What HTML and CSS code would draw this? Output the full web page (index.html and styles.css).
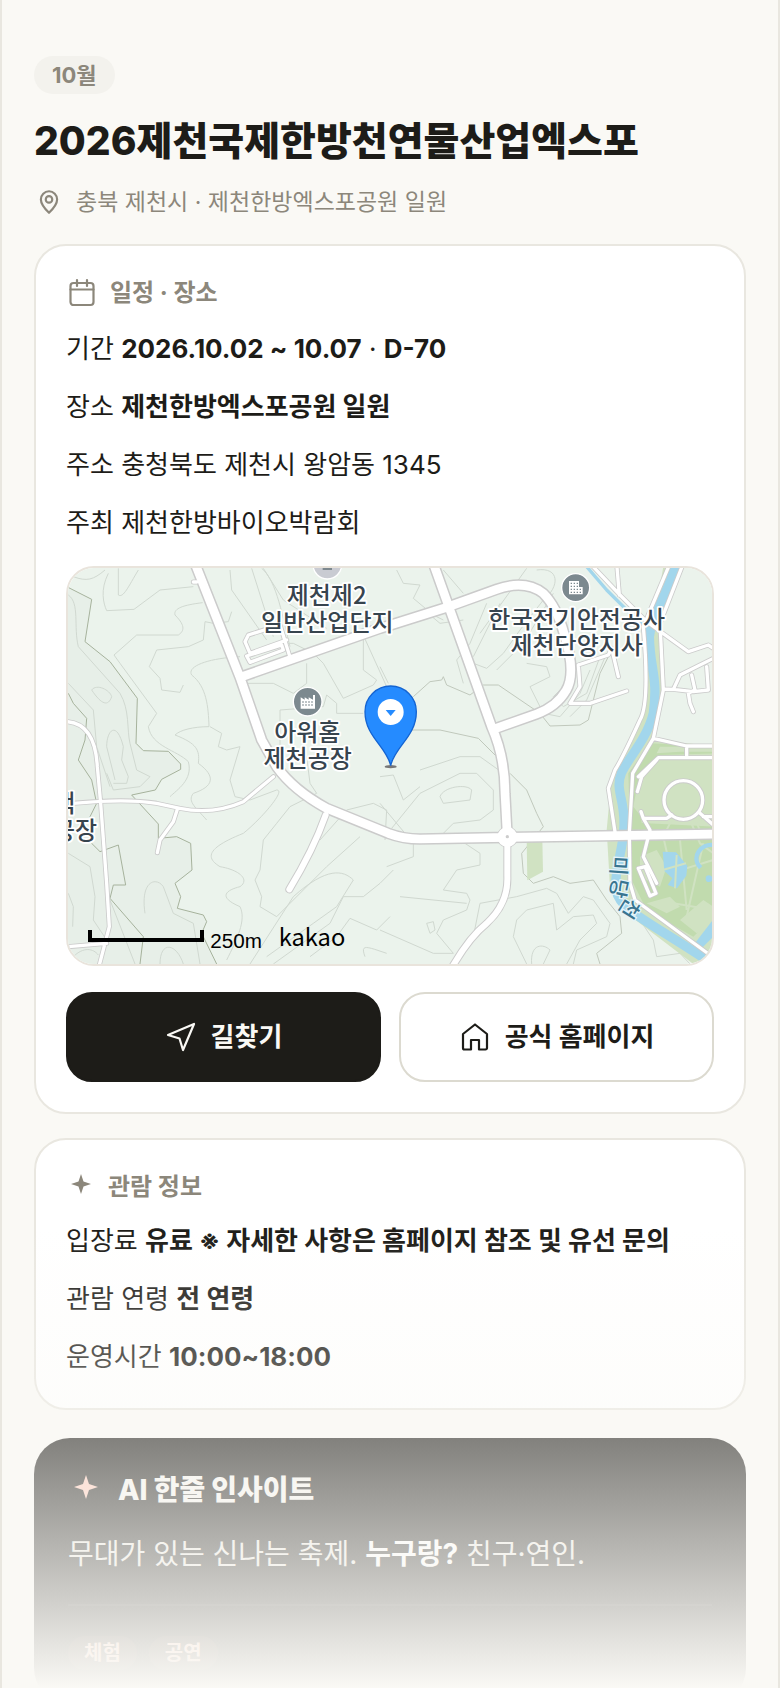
FILE: index.html
```html
<!DOCTYPE html>
<html lang="ko">
<head>
<meta charset="utf-8">
<meta name="viewport" content="width=device-width, initial-scale=1">
<title>2026제천국제한방천연물산업엑스포</title>
<link rel="stylesheet" href="styles.css">
</head>
<body>
<main class="page">
  <header class="head">
    <span class="month">10월</span>
    <h1 class="title">2026제천국제한방천연물산업엑스포</h1>
    <p class="place">
      <svg class="place-icon" viewBox="0 0 24 24" aria-hidden="true"><path d="M12 22C9 19 4.500 14.500 4.500 9.600a7.500 7.500 0 0 1 15 0C19.500 14.500 15 19 12 22z"/><circle cx="12" cy="9.600" r="3"/></svg>
      <span>충북 제천시 · 제천한방엑스포공원 일원</span>
    </p>
  </header>

  <section class="card schedule">
    <h2 class="card-title">
      <svg class="icon" viewBox="0 0 32 32" aria-hidden="true"><rect x="4.500" y="6" width="23" height="22" rx="3"/><path d="M4.500 12.500h23M11 3v6M21 3v6"/></svg>
      <span>일정 · 장소</span>
    </h2>
    <div class="rows">
      <p>기간 <b>2026.10.02 ~ 10.07</b> · <b>D-70</b></p>
      <p>장소 <b>제천한방엑스포공원 일원</b></p>
      <p>주소 충청북도 제천시 왕암동 1345</p>
      <p>주최 제천한방바이오박람회</p>
    </div>
    <div class="map">
      <svg class="map-canvas" viewBox="24 24 1932 1188" preserveAspectRatio="xMidYMid slice" role="img" aria-label="제천한방엑스포공원 지도">
        <rect class="land" x="0" y="0" width="1980" height="1240"/>
        <path class="hill" d="M20 80L95 118 75 245 150 305 232 415 228 550 250 572 325 574 362 612V628L305 658 286 690 215 705 295 792V835L350 830 392 850 396 930 345 970 362 1010 352 1045 430 1065 440 1085 425 1120 470 1212H20z"/>
        <g class="contour">
          <path d="M40 50C80 65 100 60 135 30M145 40C120 90 130 130 140 152L222 148 300 90 400 80M175 25V105C190 115 205 80 235 30M428 128C370 135 340 145 345 165 380 200 370 215 355 225L230 225 162 285 180 310 290 460 265 500C275 560 350 570 385 605 400 660 350 690 330 710"/>
          <path d="M515 155L505 185 460 190 435 185 430 240 385 260 290 270 268 320 300 355 305 390 360 397 370 375M540 290C440 295 380 320 395 345 440 380 445 440 447 500 400 500 360 510 345 525 410 550 420 570 415 610 470 650 460 680 400 700 380 725 410 745 440 780 520 800V835L430 860 415 925 460 955 395 985 390 1020 460 1060 480 1100 450 1180 440 1212"/>
          <path d="M510 30L515 90 620 240M575 25L640 230M605 25C650 60 670 180 690 260M610 25L670 120 800 205M450 500L485 520 475 560 500 570 540 560 510 660 525 710 570 720 650 690C680 690 600 780 550 820 450 860 430 890 480 920 540 930 570 960 540 980 500 990 470 1010 540 1040 560 1080 530 1140 500 1200"/>
          <path d="M25 105C60 130 40 200 55 260L180 400C210 450 200 510 210 550L230 630 270 650 240 680 160 690 140 640M25 370L100 450 110 560 150 680M95 390C110 370 150 390 155 410 145 440 125 435 95 390M160 670L200 670 205 650 185 600 190 560C170 480 140 510 140 560L165 660M25 880L90 920 105 1010 100 1080 140 1140M25 1000L40 1040 38 1100M150 1020L225 1212M255 1060C240 960 290 950 310 980L340 1060 400 1090 420 1212M300 1212C300 1140 350 1150 370 1212M40 1190C70 1160 100 1165 115 1185"/>
          <path d="M690 590L740 590 750 670 770 700 690 740 650 790 610 840 600 930 585 960 605 1010 600 1040 650 1070 800 920 900 830M660 590V450L790 440 800 405 830 430 830 460 910 460M740 310V370L700 400 640 370H560M910 180V330L950 360 940 375 850 415 790 310 760 280 700 250 670 250M905 215L980 380M570 1212L700 1010C800 920 850 930 880 960L830 1040 760 1090 620 1190M640 1212L810 1090 850 1010 910 1010 960 970 1000 930M780 840L860 750 940 730 980 750 975 840M750 1190L830 1130 870 1075 950 1110 990 1070M915 1190C900 1150 920 1160 980 1180"/>
          <path d="M1010 30L1030 70 1080 75 1060 115 1120 165 1150 180M1110 165L1140 190 1210 180M1150 30L1210 100M1280 130L1230 250 1190 300 1210 370M1320 130L1240 290M1430 30C1500 20 1500 80 1450 120L1380 210 1330 280 1280 325 1240 310M1400 25L1260 220M1480 100L1390 250 1310 330M960 320L985 370M1310 330M1590 330L1560 400 1500 470 1450 460 1410 380 1470 350 1460 320 1400 310M1640 280L1580 420 1530 470M1620 290L1580 400 1510 440 1480 410 1510 380M1080 630L1200 590 1260 590 1330 640M995 805L1080 700 1200 640 1250 640 1300 690 1300 750 1260 780 1180 790 1150 820M1140 710C1150 680 1220 670 1235 690L1230 720 1150 730zM960 650L1000 645 1030 720 1080 680M960 730L1060 850V890L980 920M1160 850L1200 840 1260 880 1260 915 1190 930 1150 990 1220 1000 1230 1020 1220 1050 1150 1080 1130 1120 1180 1180 1120 1180 960 1110M1020 1010L1220 1030M1100 1090L1120 1085 1125 1110 1110 1120zM1240 1130L1260 1030 1370 1010 1460 985 1490 1000 1525 1060 1570 1010 1600 1020 1650 1090 1640 1130 1550 1170 1540 1212M1400 1212L1360 1130 1370 1080 1400 1050 1480 1030 1490 1110 1540 1070 1600 1065 1610 1090 1560 1140 1520 1212M1415 1212C1410 1150 1450 1150 1470 1170L1450 1212M1740 1080L1780 1140 1790 1190 1860 1180 1890 1212"/>
        </g>
        <g class="ridge">
          <path d="M20 80L95 118 75 245 150 305 232 415 228 550 250 572 325 574 362 612V628L305 658 286 690 215 705 295 792V835L350 830 392 850 396 930 345 970 362 1010 352 1045 430 1065 440 1085 425 1120 470 1212"/>
          <path d="M25 400L40 430 80 475 75 540 55 600 95 660 110 730 90 770 95 850 120 875 175 855 197 975H160L150 1015 250 1130 240 1212"/>
        </g>
        <g class="border-line">
          <path d="M1060 410L1110 365 1145 360 1150 350 1160 375 1230 405 1270 375 1315 375 1440 460 1470 498 1560 495 1585 480 1620 340 1650 280M1040 510H1140L1255 535 1310 590M1350 640L1400 690 1430 760 1450 800 1385 880 1390 940 1420 970 1480 950 1530 970 1600 960 1640 1020 1680 1070 1685 1120 1610 1180 1620 1212M1840 110L1885 125 1890 160 1925 160 1940 125H1960"/>
        </g>

        <path class="park" d="M1400 840h47l2 95-47 26z"/>
        <path class="park" d="M1810 20L1780 190 1745 470 1655 650 1640 810 1650 980 1700 1060 1900 1212H1980V560L1780 540 1810 380 1800 240 1870 20z"/>
        <path class="land" d="M1860 20L1800 210 1815 400 1785 535 1860 545 1980 550V20z"/>
        <path class="park-deep" d="M1770 550L1960 560V580L1800 585 1735 660 1720 740 1760 790 1960 800V1070L1900 1130 1760 1050 1715 960 1705 640z"/>
        <path class="park" d="M1810 600H1960V770H1810L1745 790 1735 700zM1790 580L1860 575H1960V560H1800z"/>
        <path class="park" d="M1740 890l50-20 30 50-20 60-60-30zM1760 1030l70-20 30 30-40 20zM1860 1080l70-60 30 20v50l-50 30z"/>
        <g class="garden">
          <path d="M1840 770L1810 830 1830 920M1890 780L1920 850 1960 880M1860 840L1880 1050M1830 940L1960 900M1930 850L1880 1070M1840 1030L1960 1050M1860 760L1960 790M1900 760l30 80"/>
        </g>
        <g class="water">
          <path d="M1808 875l40 2 34 40-3 30-28 38-28-10 14-20-24-22z"/>
          <path d="M1908 1145L1960 1078V1130L1925 1165z"/>
          <circle cx="1947" cy="956" r="10"/>
        </g>
        <path class="water-ring" d="M1960 855c-35-6-70 35-38 68"/>
        <path class="garden" d="M1808 930l70-20M1850 885l-5 100"/>
        <path class="river" d="M1845 20C1820 110 1775 160 1768 230 1770 330 1795 350 1780 460 1760 540 1700 600 1684 640 1664 690 1696 720 1692 800 1690 870 1660 940 1668 990 1680 1050 1750 1075 1940 1200"/>
        <path class="brook" d="M1580 20L1640 90 1720 170 1780 225"/>

        <g class="casing">
          <path class="w3" d="M405 10L540 352 605 540 650 620Q700 690 800 745L985 820Q1030 837 1080 837L1340 832 1980 822M540 352L960 205 1160 142 1310 88Q1395 58 1450 100 1490 140 1512 220 1550 340 1518 392 1490 440 1430 462L1300 508M1120 10L1295 500Q1335 590 1335 700L1342 832"/>
          <path class="w2" d="M1342 832V950Q1345 1030 1280 1090 1230 1130 1180 1215M797 765Q760 870 688 988"/>
          <path class="w1" d="M20 485Q105 490 112 620L122 730 140 970 148 1100 118 1215M40 730Q200 715 290 730L360 745Q460 765 550 725L640 650M352 748L340 785 300 840 292 878M25 1160L140 1150M570 280L555 245 565 225 660 195 688 285M570 280L680 240M560 288L665 255 670 270 570 307zM400 66h10"/>
          <path class="w1" d="M1590 10L1680 105 1760 185 1885 275 1945 255 1960 265M1670 10L1678 105M1830 10L1750 200Q1770 430 1740 480 1690 590 1665 630L1645 685 1665 815M1870 10L1800 190 1810 390 1780 535 1718 640 1708 820 1710 970 1725 1020 1950 1185M1780 535L1880 558H1960M1880 558V590M1960 593H1795L1735 650M1555 315L1645 285 1655 265 1675 350M1555 315L1560 380 1530 430H1590L1700 393M1810 387L1840 388 1860 345 1960 295M1840 388L1900 395 1945 390 1940 320M1895 345L1905 390 1885 400 1890 430 1900 455M1790 600L1745 650 1732 695M1743 755L1750 775H1820L1835 765M1750 775L1770 810 1750 890 1790 970M1735 925L1755 920 1788 1000 1770 1008zM1920 760L1960 795M1930 770H1960"/>
          <circle class="w1" cx="1870" cy="720" r="58"/>
          <circle class="hub" cx="1342" cy="831" r="30"/>
        </g>
        <g class="road">
          <path class="w3" d="M405 10L540 352 605 540 650 620Q700 690 800 745L985 820Q1030 837 1080 837L1340 832 1980 822M540 352L960 205 1160 142 1310 88Q1395 58 1450 100 1490 140 1512 220 1550 340 1518 392 1490 440 1430 462L1300 508M1120 10L1295 500Q1335 590 1335 700L1342 832"/>
          <path class="w2" d="M1342 832V950Q1345 1030 1280 1090 1230 1130 1180 1215M797 765Q760 870 688 988"/>
          <path class="w1" d="M20 485Q105 490 112 620L122 730 140 970 148 1100 118 1215M40 730Q200 715 290 730L360 745Q460 765 550 725L640 650M352 748L340 785 300 840 292 878M25 1160L140 1150M570 280L555 245 565 225 660 195 688 285M570 280L680 240M560 288L665 255 670 270 570 307zM400 66h10"/>
          <path class="w1" d="M1590 10L1680 105 1760 185 1885 275 1945 255 1960 265M1670 10L1678 105M1830 10L1750 200Q1770 430 1740 480 1690 590 1665 630L1645 685 1665 815M1870 10L1800 190 1810 390 1780 535 1718 640 1708 820 1710 970 1725 1020 1950 1185M1780 535L1880 558H1960M1880 558V590M1960 593H1795L1735 650M1555 315L1645 285 1655 265 1675 350M1555 315L1560 380 1530 430H1590L1700 393M1810 387L1840 388 1860 345 1960 295M1840 388L1900 395 1945 390 1940 320M1895 345L1905 390 1885 400 1890 430 1900 455M1790 600L1745 650 1732 695M1743 755L1750 775H1820L1835 765M1750 775L1770 810 1750 890 1790 970M1735 925L1755 920 1788 1000 1770 1008zM1920 760L1960 795M1930 770H1960"/>
          <circle class="w1" cx="1870" cy="720" r="58"/>
          <circle class="hub" cx="1342" cy="831" r="30"/>
        </g>
        <circle class="hub-dot" cx="1342" cy="830" r="5"/>

        <g>
          <circle class="poi-light" cx="802" cy="14" r="43"/>
          <path class="poi-dark" d="M788 20h28v10h-28z"/>
          <circle class="poi" cx="743" cy="425" r="43"/>
          <path class="poi-mark" d="M722 446V412l12 7v-7l12 7v-7l13 7V405h6v41z"/>
          <path class="poi-dots" d="M727 426h36M727 435h36"/>
          <circle class="poi" cx="1547" cy="83" r="42"/>
          <path class="poi-mark" d="M1527 103V63h30v18h11v22z"/>
          <path class="poi-dots" d="M1532 70h22M1532 79h22M1532 88h34M1532 97h34"/>
        </g>
        <g class="label">
          <text x="800" y="132">제천제2</text>
          <text x="802" y="212">일반산업단지</text>
          <text x="742" y="543">아워홈</text>
          <text x="743" y="622">제천공장</text>
          <text x="1550" y="203">한국전기안전공사</text>
          <text x="1550" y="283">제천단양지사</text>
          <text x="13" y="757">택</text>
          <text x="45" y="836">공장</text>
        </g>
        <g class="river-label">
          <text transform="translate(1676 918) rotate(94)" x="0" y="22">미</text>
          <text transform="translate(1676 985) rotate(102)" x="0" y="22">당</text>
          <text transform="translate(1708 1045) rotate(122)" x="0" y="22">천</text>
        </g>

        <ellipse class="shadow" cx="992" cy="620" rx="18" ry="5"/>
        <path class="pin" d="M992 617C980 560 915 530 915 455a77 77 0 0 1 154 0C1069 530 1004 560 992 617z"/>
        <circle class="pin-hole" cx="992" cy="456" r="39"/>
        <path class="pin-mark" d="M977 450h30l-15 18z"/>

        <path class="scale" d="M90 1110v30h336v-30"/>
        <text class="scale-text" x="451" y="1164">250m</text>
        <text class="brand" x="656" y="1157">kakao</text>
      </svg>
    </div>
    <div class="actions">
      <a class="button button-dark" href="#directions">
        <svg class="icon" viewBox="0 0 32 32" aria-hidden="true"><path d="M29 3L18 29 14.500 17.500 3 14z"/></svg>
        <span>길찾기</span>
      </a>
      <a class="button" href="#homepage">
        <svg class="icon" viewBox="0 0 32 32" aria-hidden="true"><path d="M16 3.500L4 13V27a1.500 1.500 0 0 0 1.500 1.500H12V19h8v9.500h6.500a1.500 1.500 0 0 0 1.500-1.500V13z"/></svg>
        <span>공식 홈페이지</span>
      </a>
    </div>
  </section>

  <section class="card">
    <h2 class="card-title">
      <svg class="star" viewBox="0 0 30 30" aria-hidden="true"><path d="M15 2L17.500 9.500 25 12 17.500 14.500 15 22 12.500 14.500 5 12 12.500 9.500z"/></svg>
      <span>관람 정보</span>
    </h2>
    <div class="rows">
      <p>입장료 <b>유료 ※ 자세한 사항은 홈페이지 참조 및 유선 문의</b></p>
      <p>관람 연령 <b>전 연령</b></p>
      <p>운영시간 <b>10:00~18:00</b></p>
    </div>
  </section>

  <section class="insight">
    <h2 class="insight-title">
      <svg class="insight-star" viewBox="0 0 36 36" aria-hidden="true"><path d="M18 3L21 12 30 15 21 18 18 27 15 18 6 15 15 12z"/></svg>
      <span>AI 한줄 인사이트</span>
    </h2>
    <p class="insight-text">무대가 있는 신나는 축제. <b>누구랑?</b> 친구·연인.</p>
    <div class="tags"><span class="tag">체험</span><span class="tag">공연</span></div>
  </section>
  <div class="fade"></div>
</main>
</body>
</html>
```

FILE: styles.css
```css
* {
  box-sizing: border-box;
}

body,
h1,
h2,
p {
  margin: 0;
}

body {
  background: #faf9f5;
  color: #1d1c18;
  font-family: Inter, "Noto Sans CJK KR", sans-serif;
  font-size: 26px;
}

b {
  font-weight: 700;
}

.page {
  position: relative;
  height: 100vh;
  overflow: hidden;
  padding: 56px 32px 0;
  border: solid #e9e7e0;
  border-width: 0 2px;
}

.head {
  display: flex;
  flex-direction: column;
  align-items: flex-start;
  margin-bottom: 24px;
}

.month {
  padding: 0 18px;
  border-radius: 19px;
  background: #f3f2ed;
  color: #8c877b;
  font-size: 22px;
  font-weight: 700;
  line-height: 38px;
}

.title {
  margin-top: 22px;
  font-size: 39px;
  font-weight: 800;
  line-height: 50px;
}

.place {
  display: flex;
  align-items: center;
  gap: 14px;
  margin-top: 18px;
  padding-left: 2px;
  color: #8c877b;
  font-size: 23px;
  line-height: 36px;
}

.place-icon {
  width: 26px;
  height: 26px;
  fill: none;
  stroke: currentColor;
  stroke-width: 2;
  stroke-linejoin: round;
}

.card {
  margin-bottom: 24px;
  padding: 30px;
  border: 2px solid #e9e7e0;
  border-radius: 32px;
  background: #fff;
}

.card-title {
  display: flex;
  align-items: center;
  gap: 12px;
  margin-bottom: 16px;
  color: #8c877b;
  font-size: 24px;
  font-weight: 700;
  line-height: 34px;
}

.schedule .card-title {
  margin-bottom: 18px;
}

.icon {
  width: 32px;
  height: 32px;
  fill: none;
  stroke: currentColor;
  stroke-width: 2.2;
  stroke-linecap: round;
  stroke-linejoin: round;
}

.star {
  width: 30px;
  height: 30px;
  fill: currentColor;
}

.rows {
  display: grid;
  gap: 16px;
  line-height: 42px;
}

.map {
  height: 400px;
  margin: 22px 0 26px;
  overflow: hidden;
  border: 2px solid #e9e4dc;
  border-radius: 28px;
}

.map-canvas {
  display: block;
  width: 100%;
  height: 100%;
}

.land { fill: #ebf3ec; }
.hill { fill: #e7efe8; }
.park { fill: #d0e2c2; }
.park-deep { fill: #c1dbae; }
.water { fill: #a2d6ec; }

.contour,
.ridge,
.border-line,
.garden,
.casing,
.road,
.river,
.brook,
.water-ring,
.scale {
  fill: none;
  stroke-linejoin: round;
}

.contour { stroke: #d0d8d0; stroke-width: 3; }
.ridge { stroke: #a6b29c; stroke-width: 3; }
.border-line { stroke: #c0c8bc; stroke-width: 3; }
.garden { stroke: #d0e2c2; stroke-width: 6; }
.river { stroke: #a2d6ec; stroke-width: 28; }
.brook { stroke: #a2d6ec; stroke-width: 10; }
.water-ring { stroke: #a2d6ec; stroke-width: 13; }
.casing { stroke: #cbcbcb; stroke-linecap: round; }
.casing .w3 { stroke-width: 35; }
.casing .w2 { stroke-width: 24; }
.casing .w1 { stroke-width: 15; }
.casing .hub { stroke-width: 4; }
.road { stroke: #fff; stroke-linecap: round; }
.road .w3 { stroke-width: 26; }
.road .w2 { stroke-width: 18; }
.road .w1 { stroke-width: 10; }
.road .hub { fill: #fff; stroke: none; }
.hub-dot { fill: #ccc; }
.poi-light { fill: #c9cbd2; stroke: #fff; stroke-width: 4; }
.poi-dark { fill: #7d888e; }
.poi { fill: #7c898f; stroke: #fff; stroke-width: 4; }
.poi-mark { fill: #fff; }
.poi-dots { fill: none; stroke: #7c898f; stroke-width: 4; stroke-dasharray: 4 5; }

.label {
  fill: #37444e;
  stroke: #fff;
  stroke-width: 11;
  stroke-linejoin: round;
  paint-order: stroke;
  font-family: "Noto Sans CJK KR", sans-serif;
  font-size: 72px;
  font-weight: 500;
  text-anchor: middle;
}

.river-label {
  fill: #397590;
  stroke: #e4f3f8;
  stroke-width: 8;
  paint-order: stroke;
  font-family: "Noto Sans CJK KR", sans-serif;
  font-size: 63px;
  font-weight: 500;
  text-anchor: middle;
}

.shadow { fill: #777; }
.pin { fill: #258bff; stroke: #1464d2; stroke-width: 4; }
.pin-hole { fill: #fff; }
.pin-mark { fill: #258bff; }
.scale { stroke: #000; stroke-width: 12; stroke-linejoin: miter; }
.scale-text { font-family: "Liberation Sans", sans-serif; font-size: 62px; }
.brand { font-family: "Noto Sans CJK KR", sans-serif; font-size: 71px; }

.actions {
  display: grid;
  grid-template-columns: 1fr 1fr;
  gap: 18px;
}

.button {
  display: flex;
  align-items: center;
  justify-content: center;
  gap: 14px;
  min-height: 90px;
  border: 2px solid #dcdad0;
  border-radius: 26px;
  background: #fff;
  color: #1d1c18;
  font-size: 26px;
  font-weight: 700;
  line-height: 36px;
  text-decoration: none;
}

.button-dark {
  border-color: #1d1c18;
  background: #1d1c18;
  color: #faf9f5;
}

.insight {
  margin-top: 28px;
  padding: 34px;
  border-radius: 36px;
  background: #1d1c18;
  color: #e9e7e0;
  font-size: 28px;
}

.insight-title {
  display: flex;
  align-items: center;
  gap: 14px;
  color: #f5f3ee;
  font-size: 28px;
  font-weight: 800;
  line-height: 36px;
}

.insight-star {
  width: 36px;
  height: 36px;
  fill: #ffc9b8;
}

.insight-text {
  margin-top: 22px;
  padding-bottom: 26px;
  border-bottom: 2px solid #2c2b27;
  line-height: 48px;
}

.insight-text b {
  color: #fff;
}

.tags {
  display: flex;
  gap: 12px;
  margin-top: 30px;
}

.tag {
  padding: 0 16px;
  border-radius: 17px;
  background: #342821;
  color: #ffc9b8;
  font-size: 20px;
  font-weight: 600;
  line-height: 34px;
}

.fade {
  position: absolute;
  right: -2px;
  bottom: 0;
  left: -2px;
  height: 460px;
  background: linear-gradient(#faf9f500, #faf9f5);
  pointer-events: none;
}
```
